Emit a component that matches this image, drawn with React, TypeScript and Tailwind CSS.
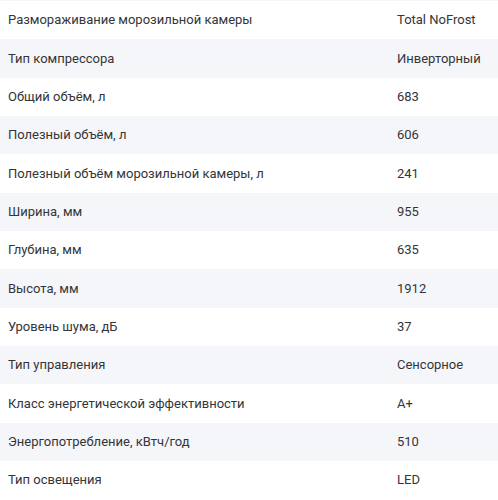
const specs = [
  ["Размораживание морозильной камеры", "Total NoFrost"],
  ["Тип компрессора", "Инверторный"],
  ["Общий объём, л", "683"],
  ["Полезный объём, л", "606"],
  ["Полезный объём морозильной камеры, л", "241"],
  ["Ширина, мм", "955"],
  ["Глубина, мм", "635"],
  ["Высота, мм", "1912"],
  ["Уровень шума, дБ", "37"],
  ["Тип управления", "Сенсорное"],
  ["Класс энергетической эффективности", "A+"],
  ["Энергопотребление, кВтч/год", "510"],
  ["Тип освещения", "LED"],
];

export default function App() {
  return (
    <div className="w-[498px] h-[500px] overflow-hidden bg-white font-['Roboto',sans-serif] text-[13px] text-[#333538]">
      <div className="h-px bg-[#f5f6fa]" />
      {specs.map(([label, value], i) => (
        <div
          key={i}
          className={`flex items-center h-[38.33px] px-2 ${i % 2 === 1 ? "bg-[#f5f6fa]" : "bg-white"}`}
        >
          <span className="flex-1">{label}</span>
          <span className="w-[93px]">{value}</span>
        </div>
      ))}
    </div>
  );
}
